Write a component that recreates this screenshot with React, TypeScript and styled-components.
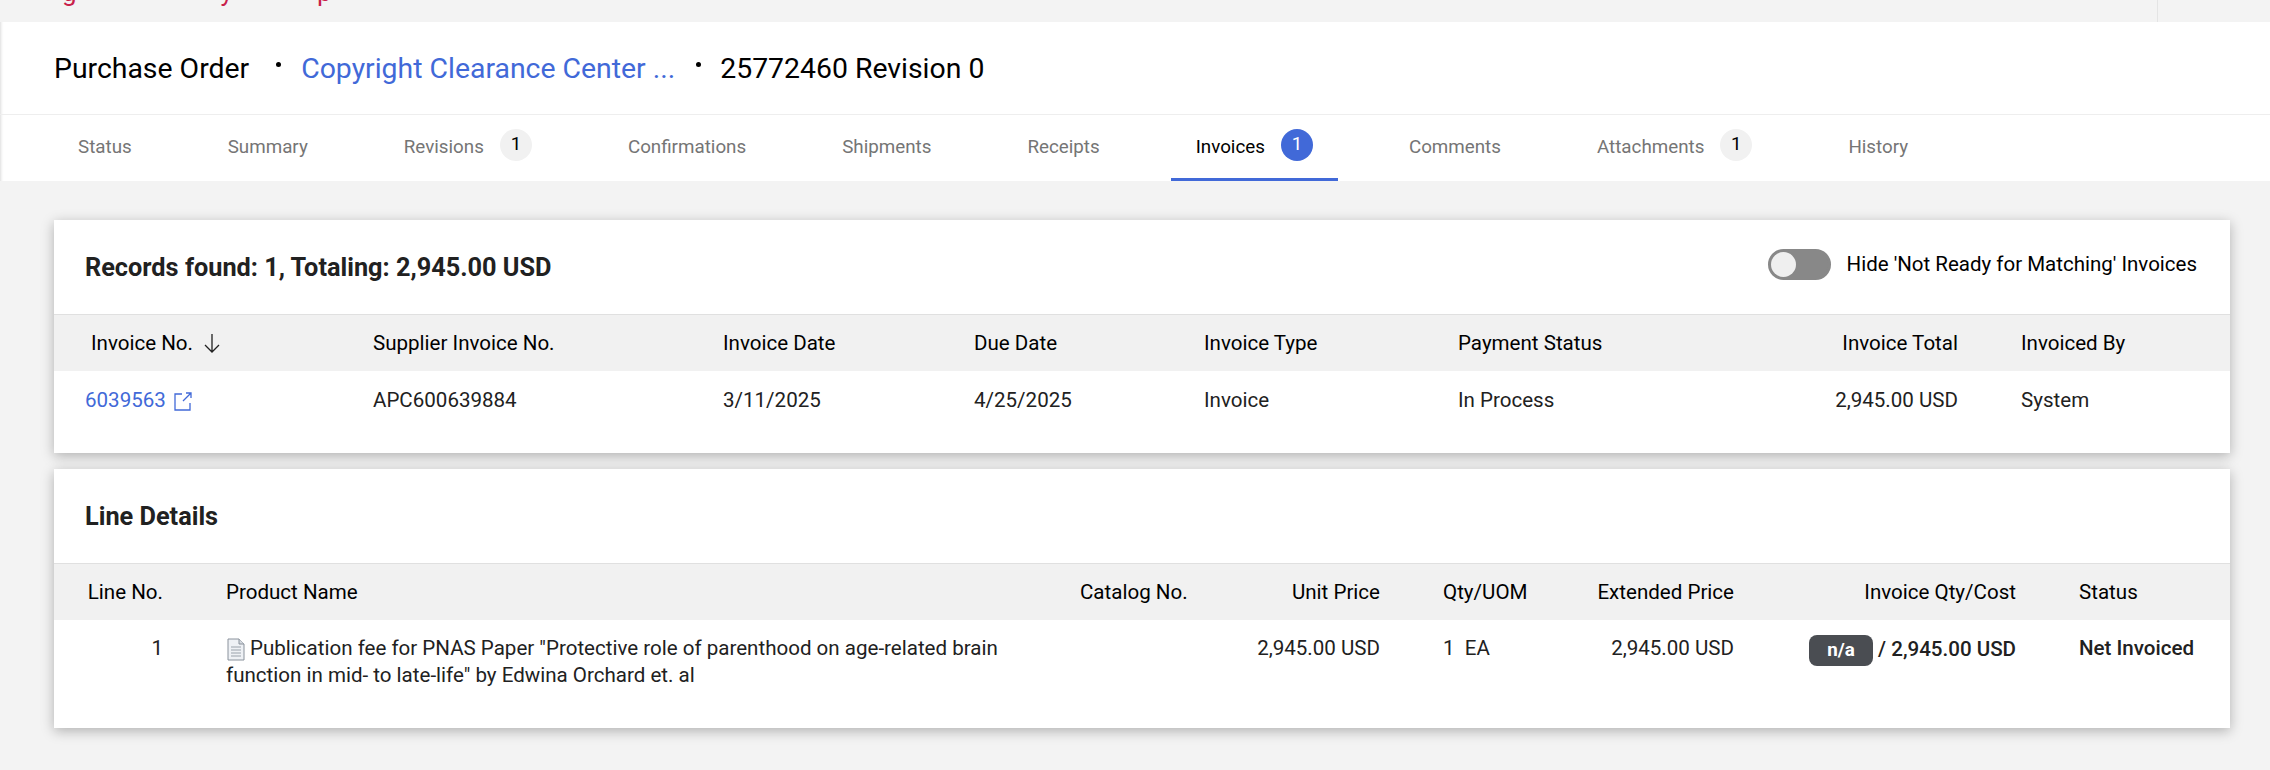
import React from "react";
import styled, { createGlobalStyle } from "styled-components";

const GlobalStyle = createGlobalStyle`
  html, body {
    margin: 0;
    padding: 0;
    background: #f3f3f3;
    font-family: Roboto, "Liberation Sans", sans-serif;
    color: #212121;
  }
`;

const Page = styled.div`
  width: 2270px;
  height: 770px;
  overflow: hidden;
  background: #f3f3f3;
`;

const TopStrip = styled.div`
  height: 22px;
  display: flex;
  overflow: hidden;
`;

const Banner = styled.div`
  flex: 1;
  display: flex;
  margin-top: -21px;
  padding-left: 62px;
  font-size: 26px;
  line-height: 26px;
  color: #c8204a;
`;

const BannerGlyph = styled.span<{ $gap: number }>`
  margin-right: ${(p) => p.$gap}px;
`;

const TopAside = styled.div`
  width: 112px;
  border-left: 1px solid #e4e4e4;
`;

const TitleBar = styled.div`
  height: 92px;
  padding-left: 54px;
  display: flex;
  align-items: center;
  background: #fff;
  border-bottom: 1px solid #eeeeee;
  box-shadow: inset 4px 0 3px -3px rgba(0, 0, 0, 0.14);
  font-size: 28.4px;
  color: #000;
`;

const Dot = styled.span<{ $before: number; $after: number }>`
  width: 5px;
  height: 5px;
  margin: -8px ${(p) => p.$after}px 0 ${(p) => p.$before}px;
  border-radius: 50%;
  background: #000;
`;

const TitleLink = styled.a`
  color: #4169d8;
`;

const TabBar = styled.div`
  height: 66px;
  padding-left: 53px;
  display: flex;
  gap: 46px;
  background: #fff;
  box-shadow: inset 4px 0 3px -3px rgba(0, 0, 0, 0.14);
`;

const Tab = styled.div<{ $active?: boolean }>`
  display: flex;
  align-items: flex-start;
  gap: 16px;
  padding: 14px 25px 0;
  font-size: 18.8px;
  line-height: 36px;
  color: ${(p) => (p.$active ? "#000" : "#757575")};
  border-bottom: 3px solid ${(p) => (p.$active ? "#4169d8" : "transparent")};
`;

const TabBadge = styled.span<{ $active?: boolean }>`
  width: 32px;
  height: 32px;
  border-radius: 50%;
  text-align: center;
  line-height: 30px;
  background: ${(p) => (p.$active ? "#4169d8" : "#f1f1f1")};
  color: ${(p) => (p.$active ? "#fff" : "#000")};
`;

const Content = styled.div`
  padding: 39px 40px 0 54px;
  display: flex;
  flex-direction: column;
  gap: 16px;
`;

const Card = styled.section`
  background: #fff;
  box-shadow: 0 3px 12px rgba(0, 0, 0, 0.28);
`;

const CardHead = styled.div`
  height: 94px;
  padding: 0 33px 0 31px;
  display: flex;
  align-items: center;
  justify-content: space-between;
  border-bottom: 1px solid #e0e0e0;
`;

const CardTitle = styled.h2`
  margin: 0;
  font-size: 25.3px;
  font-weight: 700;
  color: #212121;
`;

const ToggleRow = styled.label`
  display: flex;
  align-items: center;
  gap: 16px;
  margin-top: -6px;
  font-size: 20.5px;
  color: #000;
`;

const ToggleTrack = styled.span`
  width: 63px;
  height: 31px;
  box-sizing: border-box;
  border: 3px solid #888;
  border-radius: 16px;
  background: #888;
  display: block;
`;

const ToggleKnob = styled.span`
  width: 25px;
  height: 25px;
  border-radius: 50%;
  background: #efefef;
  display: block;
`;

const Row = styled.div<{ $cols: string; $head?: boolean; $height: number }>`
  display: grid;
  grid-template-columns: ${(p) => p.$cols};
  height: ${(p) => p.$height}px;
  background: ${(p) => (p.$head ? "#f1f1f1" : "#fff")};
  color: ${(p) => (p.$head ? "#000" : "#212121")};
  font-size: 20.55px;
  line-height: 27px;
`;

const Cell = styled.div<{ $right?: boolean; $pad?: number; $bold?: boolean; $top?: number }>`
  padding-top: ${(p) => p.$top ?? 15}px;
  padding-left: ${(p) => p.$pad ?? 0}px;
  padding-right: ${(p) => (p.$right ? 63 : 0)}px;
  text-align: ${(p) => (p.$right ? "right" : "left")};
  font-weight: ${(p) => (p.$bold ? 500 : 400)};
`;

const SortIcon = styled.svg`
  width: 20px;
  height: 22px;
  margin-left: 9px;
  vertical-align: -4px;
`;

const InvoiceLink = styled.a`
  color: #4169d8;
`;

const LinkIcon = styled.svg`
  width: 20px;
  height: 20px;
  margin-left: 7px;
  vertical-align: -4px;
`;

const ProductText = styled.div`
  width: 785px;
`;

const DocIcon = styled.svg`
  width: 20px;
  height: 23px;
  margin-right: 4px;
  vertical-align: -6px;
`;

const NaPill = styled.span`
  display: inline-block;
  width: 64px;
  height: 31px;
  margin-right: 5px;
  border-radius: 8px;
  background: #4a4d52;
  color: #fff;
  font-size: 18.8px;
  font-weight: 700;
  line-height: 30px;
  text-align: center;
`;

const invoiceCols = "319px 350px 251px 230px 254px 300px 263px 209px";
const lineCols = "172px 854px 120px 243px 154px 200px 282px 151px";

export default function App() {
  return (
    <Page>
      <GlobalStyle />
      <TopStrip>
        <Banner>
          <BannerGlyph $gap={144}>g</BannerGlyph>
          <BannerGlyph $gap={84}>y</BannerGlyph>
          <BannerGlyph $gap={0}>p</BannerGlyph>
        </Banner>
        <TopAside />
      </TopStrip>
      <TitleBar>
        Purchase Order
        <Dot $before={27} $after={20} />
        <TitleLink>Copyright Clearance Center ...</TitleLink>
        <Dot $before={21} $after={19} />
        25772460 Revision 0
      </TitleBar>
      <TabBar>
        <Tab>Status</Tab>
        <Tab>Summary</Tab>
        <Tab>
          Revisions <TabBadge>1</TabBadge>
        </Tab>
        <Tab>Confirmations</Tab>
        <Tab>Shipments</Tab>
        <Tab>Receipts</Tab>
        <Tab $active>
          Invoices <TabBadge $active>1</TabBadge>
        </Tab>
        <Tab>Comments</Tab>
        <Tab>
          Attachments <TabBadge>1</TabBadge>
        </Tab>
        <Tab>History</Tab>
      </TabBar>
      <Content>
        <Card>
          <CardHead>
            <CardTitle>Records found: 1, Totaling: 2,945.00 USD</CardTitle>
            <ToggleRow>
              <ToggleTrack>
                <ToggleKnob />
              </ToggleTrack>
              Hide 'Not Ready for Matching' Invoices
            </ToggleRow>
          </CardHead>
          <Row $cols={invoiceCols} $head $height={56}>
            <Cell $pad={37}>
              Invoice No.
              <SortIcon viewBox="0 0 20 22" fill="none" stroke="#212121" strokeWidth="1.3">
                <path d="M10 2v18M3 13l7 7 7-7" />
              </SortIcon>
            </Cell>
            <Cell>Supplier Invoice No.</Cell>
            <Cell>Invoice Date</Cell>
            <Cell>Due Date</Cell>
            <Cell>Invoice Type</Cell>
            <Cell>Payment Status</Cell>
            <Cell $right>Invoice Total</Cell>
            <Cell>Invoiced By</Cell>
          </Row>
          <Row $cols={invoiceCols} $height={82}>
            <Cell $pad={31} $top={16}>
              <InvoiceLink>6039563</InvoiceLink>
              <LinkIcon viewBox="0 0 20 20" fill="none" stroke="#4169d8" strokeWidth="1.3">
                <path d="M9 3H2v16h15v-7M10 10l8-8M13 2h5v5" />
              </LinkIcon>
            </Cell>
            <Cell $top={16}>APC600639884</Cell>
            <Cell $top={16}>3/11/2025</Cell>
            <Cell $top={16}>4/25/2025</Cell>
            <Cell $top={16}>Invoice</Cell>
            <Cell $top={16}>In Process</Cell>
            <Cell $right $top={16}>2,945.00 USD</Cell>
            <Cell $top={16}>System</Cell>
          </Row>
        </Card>
        <Card>
          <CardHead>
            <CardTitle>Line Details</CardTitle>
          </CardHead>
          <Row $cols={lineCols} $head $height={56}>
            <Cell $right>Line No.</Cell>
            <Cell>Product Name</Cell>
            <Cell>Catalog No.</Cell>
            <Cell $right>Unit Price</Cell>
            <Cell>Qty/UOM</Cell>
            <Cell $right>Extended Price</Cell>
            <Cell $right>Invoice Qty/Cost</Cell>
            <Cell>Status</Cell>
          </Row>
          <Row $cols={lineCols} $height={108}>
            <Cell $right>1</Cell>
            <Cell>
              <ProductText>
                <DocIcon viewBox="0 0 20 23">
                  <path d="M2 1h11l5 5v16H2z" fill="#eef1f5" stroke="#8a929c" />
                  <path d="M13 1v5h5" fill="#d5dae0" stroke="#8a929c" />
                  <path d="M5 9h10M5 12h10M5 15h10M5 18h10" stroke="#9aa2ab" />
                </DocIcon>
                Publication fee for PNAS Paper "Protective role of parenthood on age-related brain function in
                mid- to late-life" by Edwina Orchard et. al
              </ProductText>
            </Cell>
            <Cell />
            <Cell $right>2,945.00 USD</Cell>
            <Cell>1&nbsp;&nbsp;EA</Cell>
            <Cell $right>2,945.00 USD</Cell>
            <Cell $right $bold>
              <NaPill>n/a</NaPill>/ 2,945.00 USD
            </Cell>
            <Cell $bold>Net Invoiced</Cell>
          </Row>
        </Card>
      </Content>
    </Page>
  );
}
